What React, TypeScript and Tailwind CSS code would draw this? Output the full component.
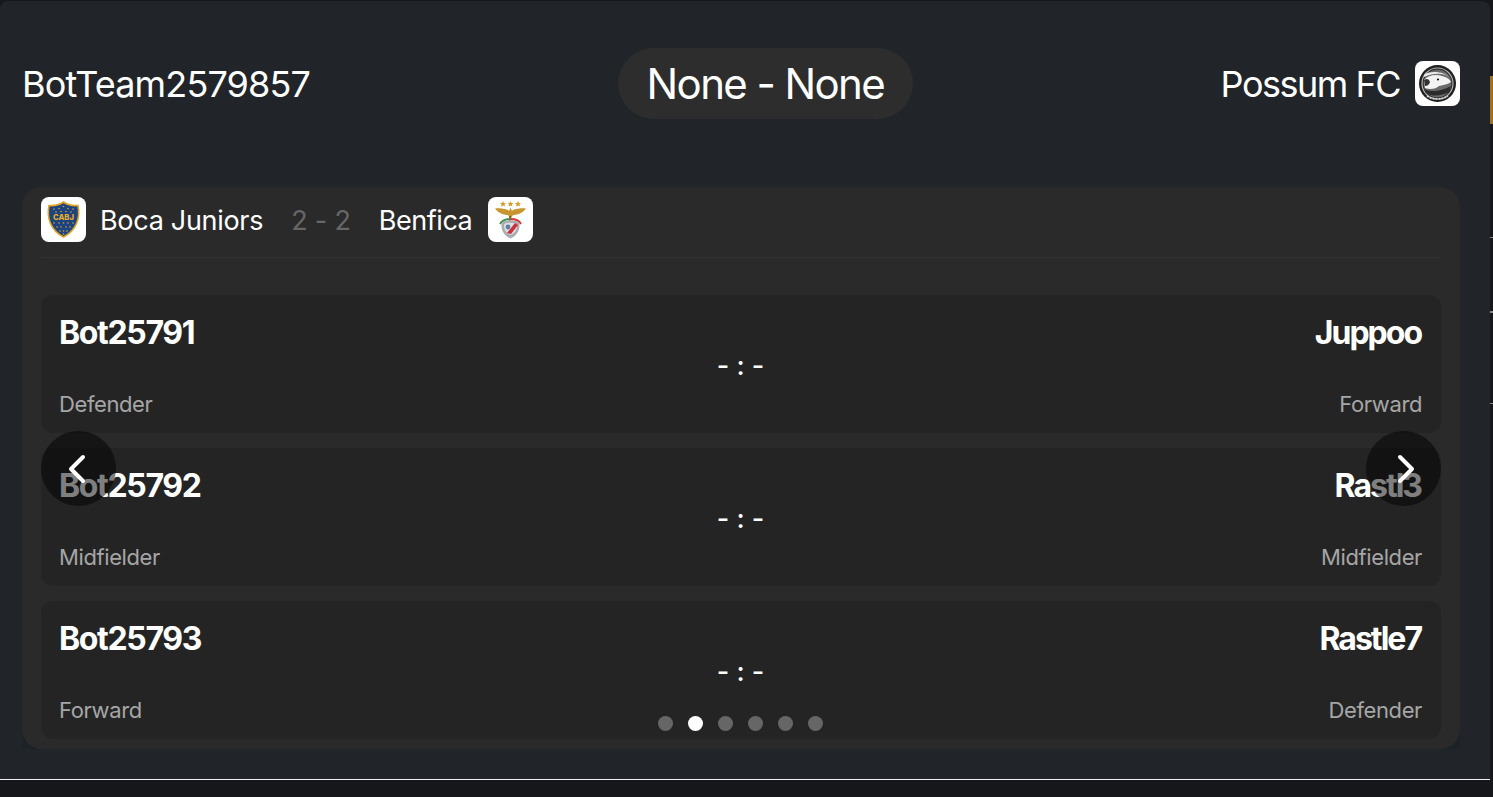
import type { ReactNode } from 'react';
import { ChevronLeft, ChevronRight } from 'lucide-react';

const matchups = [
  { home: 'Bot25791', homeRole: 'Defender', away: 'Juppoo', awayRole: 'Forward' },
  { home: 'Bot25792', homeRole: 'Midfielder', away: 'Rastl3', awayRole: 'Midfielder' },
  { home: 'Bot25793', homeRole: 'Forward', away: 'Rastle7', awayRole: 'Defender' },
];

function PossumLogo() {
  return (
    <svg viewBox="0 0 45 45" className="w-full h-full">
      <circle cx="22.5" cy="22.5" r="18.5" fill="#1f1f1f" />
      <circle cx="22.5" cy="22.5" r="15.5" fill="none" stroke="#b5b5b5" strokeWidth="1.2" />
      <circle cx="22.5" cy="22.5" r="14" fill="#6b6b6b" />
      <path d="M9 14 C14 10 28 9 36 18 C31 12 20 11 9 16 Z" fill="#eee" />
      <path d="M9 19 C13 14 21 13 27 15 C31 16 35 18 36 21 C32 24 27 24 24 25 C21 28 15 29 10 27 Z" fill="#f2f2f2" />
      <path d="M9 19 C12 17 14 18 15 21 C14 24 12 25 10 25 Z" fill="#333" />
      <circle cx="23" cy="18.5" r="1.1" fill="#111" />
      <path d="M9 28 C15 31 25 31 36 25 L34 31 C27 35 17 36 11 32 Z" fill="#2c2c2c" />
      <path d="M12 35 C18 39 27 39 33 35" fill="none" stroke="#d8d8d8" strokeWidth="1.6" strokeDasharray="2 1" />
    </svg>
  );
}

function BocaLogo() {
  return (
    <svg viewBox="0 0 45 45" className="w-full h-full">
      <path d="M8 8.5 C14 9 19 7.5 22.5 5 C26 7.5 31 9 37 8.5 C39.5 21 35.5 33 22.5 40 C9.5 33 5.5 21 8 8.5 Z" fill="#1d4480" stroke="#e0a526" strokeWidth="1.6" />
      <text x="22.5" y="22.5" textAnchor="middle" fontSize="7.6" fontWeight="800" fill="#e8ae2a" fontFamily="Inter, sans-serif">CABJ</text>
      <g fill="#d9a32c">
        <circle cx="13" cy="12" r="0.8" /><circle cx="18" cy="11.5" r="0.8" /><circle cx="22.5" cy="9.5" r="0.8" /><circle cx="27" cy="11.5" r="0.8" /><circle cx="32" cy="12" r="0.8" />
        <circle cx="15" cy="15" r="0.8" /><circle cx="20" cy="14.5" r="0.8" /><circle cx="25" cy="14.5" r="0.8" /><circle cx="30" cy="15" r="0.8" />
        <circle cx="13" cy="26" r="0.8" /><circle cx="18" cy="26" r="0.8" /><circle cx="22.5" cy="26" r="0.8" /><circle cx="27" cy="26" r="0.8" /><circle cx="32" cy="26" r="0.8" />
        <circle cx="16" cy="30" r="0.8" /><circle cx="20" cy="30" r="0.8" /><circle cx="25" cy="30" r="0.8" /><circle cx="29" cy="30" r="0.8" />
        <circle cx="19" cy="34" r="0.8" /><circle cx="22.5" cy="34" r="0.8" /><circle cx="26" cy="34" r="0.8" /><circle cx="22.5" cy="37" r="0.8" />
      </g>
    </svg>
  );
}

function BenficaLogo() {
  return (
    <svg viewBox="0 0 45 45" className="w-full h-full">
      <g fill="#dc9b22">
        <path d="M15 4 l.9 2 2.1.2-1.6 1.3.6 2-2-1.1-2 1.1.6-2-1.6-1.3 2.1-.2z" />
        <path d="M22.5 4 l.9 2 2.1.2-1.6 1.3.6 2-2-1.1-2 1.1.6-2-1.6-1.3 2.1-.2z" />
        <path d="M30 4 l.9 2 2.1.2-1.6 1.3.6 2-2-1.1-2 1.1.6-2-1.6-1.3 2.1-.2z" />
      </g>
      <path d="M7 11.5 C13 11 19 12 21 14 L22.5 10.5 L24 14 C26 12 32 11 38 11.5 C35 16 29 18 25 18 L22.5 22 L20 18 C16 18 10 16 7 11.5 Z" fill="#c9952e" />
      <path d="M22 19 V24" stroke="#6b4f1a" strokeWidth="1.4" />
      <path d="M12 27 C14 23 19 22 22.5 22" fill="none" stroke="#3c8c4a" strokeWidth="1.8" />
      <path d="M33 27 C31 23 26 22 22.5 22" fill="none" stroke="#d33" strokeWidth="1.8" />
      <path d="M13.5 27 C13.5 22 31.5 22 31.5 27 C32 34 28 39 22.5 41.5 C17 39 13 34 13.5 27 Z" fill="#a9adb1" />
      <path d="M16 28 C16 25 29 25 29 28 C29 33 27 36 22.5 38 C18 36 16 33 16 28 Z" fill="#dedede" />
      <path d="M19 36 L27 26 L30 28 L23 37 Z" fill="#c9303a" />
      <circle cx="20" cy="30" r="2.4" fill="#5b7fa6" />
    </svg>
  );
}

function LogoBox({ children }: { children: ReactNode }) {
  return <div className="w-[45px] h-[45px] shrink-0 bg-white rounded-lg overflow-hidden">{children}</div>;
}

function MatchRow({ home, homeRole, away, awayRole }: (typeof matchups)[number]) {
  return (
    <div className="h-[138px] rounded-xl bg-[#242424] pl-[18px] pr-[19px] pt-[20px] pb-[13px] grid grid-cols-[1fr_auto_1fr]">
      <div className="flex flex-col justify-between">
        <div className="text-[32px] leading-9 font-bold tracking-[-1.35px] text-white">{home}</div>
        <div className="text-[22px] leading-8 tracking-[-0.4px] text-[#a6a6a6]">{homeRole}</div>
      </div>
      <div className="text-[27px] leading-8 font-medium text-white pt-[35px]">- : -</div>
      <div className="flex flex-col justify-between items-end">
        <div className="mr-px text-[32px] leading-9 font-bold tracking-[-2px] text-white">{away}</div>
        <div className="text-[22px] leading-8 tracking-[-0.4px] text-[#a6a6a6]">{awayRole}</div>
      </div>
    </div>
  );
}

export default function App() {
  return (
    <div className="w-[1493px] h-[797px] overflow-hidden bg-[#15171b] font-['Inter',sans-serif] flex">
      <div className="w-[1490px] h-[779px] mt-px rounded-t-lg bg-[#212529] border-b border-[#f0f0f0] px-[22px] flex flex-col shrink-0">
        {/* Header */}
        <div className="h-[186px] pr-[8px] pb-[22px] flex items-center justify-between">
          <div className="pt-[2px] text-[36px] tracking-[-0.85px] text-white">BotTeam2579857</div>
          <div className="h-[71px] px-[28.5px] rounded-full bg-[#2d2d2d] flex items-center text-[42px] tracking-[-1.6px] text-white">None - None</div>
          <div className="flex items-center gap-[15px] text-[36px] tracking-[-1.5px] text-white">
            <span className="pt-[2px]">Possum FC</span>
            <LogoBox><PossumLogo /></LogoBox>
          </div>
        </div>

        {/* Game card */}
        <div className="w-[1438px] h-[562px] bg-gradient-to-b from-[#212529] from-80% to-[#1b2329]">
          <div className="relative h-full rounded-[20px] bg-[#2a2a2a] px-[19px]">
            <div className="h-[71px] border-b border-[#333] flex items-center pb-px">
              <div className="mb-[4px]"><LogoBox><BocaLogo /></LogoBox></div>
              <span className="ml-[14px] text-[27px] tracking-[-0.3px] text-white">Boca Juniors</span>
              <span className="ml-[28px] text-[27px] tracking-[-0.2px] text-[#666]">2 - 2</span>
              <span className="ml-[28px] text-[27px] tracking-[-0.45px] text-white">Benfica</span>
              <div className="ml-[16px] mb-[4px]"><LogoBox><BenficaLogo /></LogoBox></div>
            </div>

            <div className="mt-[37px] flex flex-col gap-[15px]">
              {matchups.map((m) => (
                <MatchRow key={m.home} {...m} />
              ))}
            </div>

            {/* Carousel controls */}
            <button className="absolute left-[19px] top-[244px] w-[75px] h-[75px] rounded-full bg-black/50 flex items-center justify-center text-white">
              <ChevronLeft size={48} strokeWidth={2} className="-translate-x-0.5" />
            </button>
            <button className="absolute right-[19px] top-[244px] w-[75px] h-[75px] rounded-full bg-black/50 flex items-center justify-center text-white">
              <ChevronRight size={48} strokeWidth={2} className="translate-x-0.5" />
            </button>
            <div className="absolute left-0 right-px bottom-[18px] flex justify-center gap-[15px]">
              {[0, 1, 2, 3, 4, 5].map((i) => (
                <span key={i} className={`w-[15px] h-[15px] rounded-full ${i === 1 ? 'bg-white' : 'bg-[#666]'}`} />
              ))}
            </div>
          </div>
        </div>
      </div>

      {/* Page peeking out behind the dialog */}
      <div className="flex-1 flex flex-col">
        <div className="h-[76px]" />
        <div className="h-[48px] bg-[#a0721c]" />
        <div className="h-[113px]" />
        <div className="h-px bg-[#888]" />
        <div className="h-[73px]" />
        <div className="h-[2px] bg-[#888]" />
        <div className="h-[90px]" />
        <div className="h-px bg-[#888]" />
      </div>
    </div>
  );
}
